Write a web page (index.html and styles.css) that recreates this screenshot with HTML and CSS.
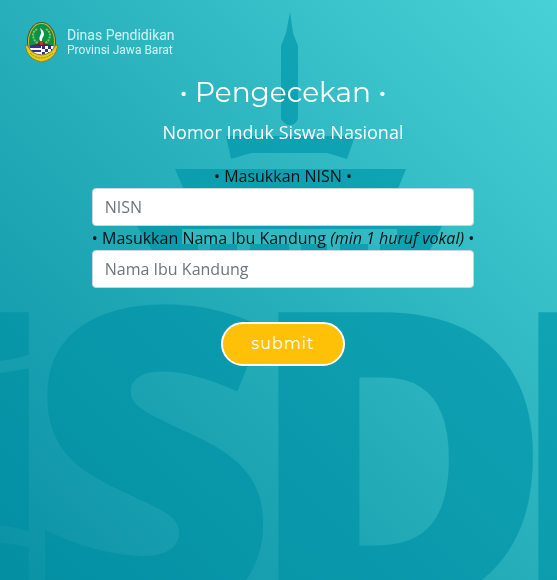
FILE: index.html
```html
<!DOCTYPE html>
<html lang="id">
<head>
  <meta charset="UTF-8" />
  <meta name="viewport" content="width=device-width, initial-scale=1.0" />
  <title>Pengecekan NISN</title>
  <link rel="stylesheet" href="styles.css">
</head>
<body>

  <!-- Latar belakang -->
  <svg class="latar" viewBox="0 0 557 580" preserveAspectRatio="xMidYMin slice" aria-hidden="true">
    <defs>
      <linearGradient id="toska" gradientUnits="userSpaceOnUse" x1="0" y1="580" x2="557" y2="0">
        <stop offset="0" stop-color="#048fa3" />
        <stop offset="1" stop-color="#14abbb" />
      </linearGradient>
      <mask id="celah">
        <rect width="557" height="580" fill="#fff" />
        <path d="M0 361Q18 359 30 354V368Q16 371 0 373z" fill="#000" />
        <path d="M0 526Q16 527 30 532V548Q16 544 0 543z" fill="#000" />
      </mask>
    </defs>
    <g fill="url(#toska)">
      <!-- Menara -->
      <path d="M290 12L293 33L298 46V119Q295 125 290 125T281 119V46L286 33z" />
      <path d="M226 136H355L347 159L327 153H251L231 159z" />
      <path d="M175 169H406L390 208H192z" />
      <path d="M137 226H442L430 250H380V244H368V250H340V244H327V250H301V244H289V250H250V244H237V250H210V244H198V250H152z" />
      <path d="M182 229H397V244H182z" fill="#31bac4" />
      <g class="huruf" mask="url(#celah)">
        <text x="-85" y="612">I</text>
      </g>
      <g class="huruf">
        <text class="lebar" x="26" y="620">S</text>
        <text x="246" y="612">D</text>
        <text x="506" y="612">I</text>
      </g>
    </g>
  </svg>

  <header class="kepala">
    <svg class="lambang" viewBox="0 0 36 42" role="img" aria-label="Lambang Jawa Barat">
      <defs>
        <clipPath id="perisai"><ellipse cx="17.5" cy="20.5" rx="12.5" ry="17.5" /></clipPath>
      </defs>
      <ellipse cx="17.5" cy="20.5" rx="14.5" ry="19.5" fill="#4b5a22" />
      <ellipse cx="17.5" cy="20.5" rx="13.5" ry="18.5" fill="#d5b52f" />
      <g clip-path="url(#perisai)">
        <rect width="36" height="42" fill="#079447" />
        <rect y="25" width="36" height="17" fill="#fff" />
        <path d="M4 25H17V27H4zM4 29H17V31H4zM6 33H17V35H6z" fill="#352f94" />
        <path d="M18 25h3v3h-3zM24 25h3v3h-3zM21 28h3v3h-3zM27 28h3v3h-3zM18 31h3v3h-3zM24 31h3v3h-3zM21 34h3v3h-3z" fill="#352f94" />
        <path d="M4 25L13 23L17.500 19L22 23L31 25z" fill="#502d34" />
      </g>
      <path d="M13 8Q7 12 10 18Q11 21 14 22M22 8Q28 12 25 18Q24 21 21 22" fill="none" stroke="#8cc35e" stroke-width="2" stroke-dasharray="2 1" />
      <path d="M16 7Q22 11 19 16Q17 18 18 21Q14 19 16 15Q18 12 16 7z" fill="#fff" />
      <circle cx="17.500" cy="22" r="2" fill="#c43b2b" />
      <path d="M1 24L4 25Q7 33 17.500 34Q28 33 31 25L34 24L32 31Q28 39 17.500 41Q7 39 3 31z" fill="#e7c919" stroke="#8b8420" />
      <path d="M6 32Q17 42 29 32" fill="none" stroke="#9a8e20" stroke-dasharray="2 1" />
    </svg>
    <div class="instansi">
      <span class="dinas">Dinas Pendidikan</span>
      <span class="provinsi">Provinsi Jawa Barat</span>
    </div>
  </header>

  <main class="konten">
    <h1>• Pengecekan •</h1>
    <h2>Nomor Induk Siswa Nasional</h2>

    <form class="formulir">
      <label for="nisn">• Masukkan NISN •</label>
      <input type="text" id="nisn" name="nisn" placeholder="NISN" />
      <label for="ibu">• Masukkan Nama Ibu Kandung <i>(min 1 huruf vokal)</i> •</label>
      <input type="text" id="ibu" name="ibu" placeholder="Nama Ibu Kandung" />
      <button type="submit">submit</button>
    </form>
  </main>

</body>
</html>
```
FILE: styles.css
```css
* {
  box-sizing: border-box;
}

body {
  margin: 0;
  min-height: 100vh;
  font-family: "Open Sans", "Noto Sans", sans-serif;
  font-size: 16px;
  line-height: 24px;
  color: #0b1214;
  background: linear-gradient(to top right, #0b91a5 0%, #27afbb 50%, #48d2d6 100%);
}

/* Gambar latar */
.latar {
  position: fixed;
  top: 0;
  left: 0;
  width: 100%;
  height: 100%;
  z-index: -1;
}

.huruf {
  font-family: "Open Sans", sans-serif;
  font-size: 420px;
  font-weight: 800;
}

.lebar {
  font-size: 436px;
}

.kepala {
  display: flex;
  align-items: center;
  gap: 7px;
  padding: 21px 24px 0;
}

.lambang {
  width: 36px;
  height: 42px;
}

.instansi {
  display: flex;
  flex-direction: column;
  font-family: Roboto, sans-serif;
  color: #d5f2f5;
}

.dinas {
  font-size: 14px;
  line-height: 16px;
}

.provinsi {
  font-size: 12px;
  line-height: 14px;
}

.konten {
  display: flex;
  flex-direction: column;
  align-items: center;
  padding: 11px 16px 24px 25px;
  text-align: center;
}

h1,
h2 {
  margin: 0;
  color: #fff;
}

h1 {
  font-family: Montserrat, Inter, sans-serif;
  font-size: 28px;
  font-weight: 400;
  line-height: 36px;
}

h2 {
  margin-top: 10px;
  font-size: 18px;
  font-weight: 400;
  line-height: 24px;
}

.formulir {
  display: flex;
  flex-direction: column;
  align-items: center;
  margin-top: 20px;
}

input {
  width: 100%;
  height: 38px;
  padding: 6px 12px;
  border: 1px solid #ced4da;
  border-radius: 4px;
  font: inherit;
  color: #495057;
  background: #fff;
}

input::placeholder {
  color: #6c757d;
  opacity: 1;
}

button {
  margin-top: 34px;
  padding: 8px 28px;
  border: 2px solid #fff;
  border-radius: 50px;
  font-family: Montserrat, Inter, sans-serif;
  font-size: 16px;
  line-height: 24px;
  letter-spacing: 1px;
  color: #fff;
  background: #ffc107;
  cursor: pointer;
}
```
